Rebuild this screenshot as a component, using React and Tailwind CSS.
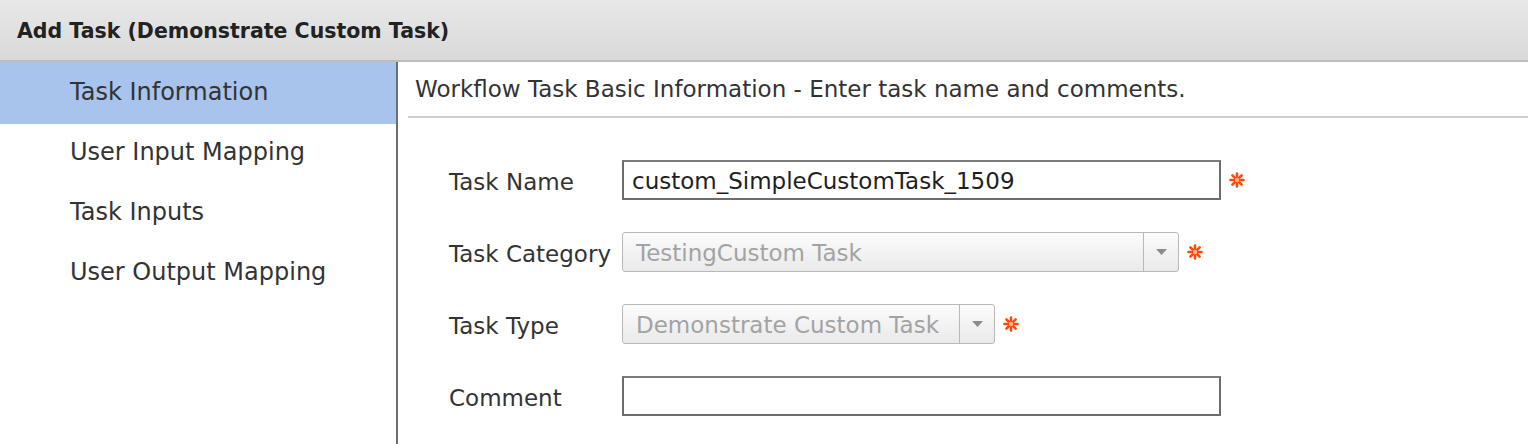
import React from "react";

const font = { fontFamily: '"DejaVu Sans", Verdana, sans-serif' };

function Required() {
  return (
    <svg width="16" height="16" viewBox="0 0 16 16" className="shrink-0">
      <g stroke="#ff4a0a" strokeWidth="2.6" strokeLinecap="round">
        <line x1="8" y1="1.5" x2="8" y2="14.5" />
        <line x1="1.5" y1="8" x2="14.5" y2="8" />
        <line x1="3.4" y1="3.4" x2="12.6" y2="12.6" />
        <line x1="12.6" y1="3.4" x2="3.4" y2="12.6" />
      </g>
      <circle cx="8" cy="8" r="2.2" fill="#ffb08a" />
    </svg>
  );
}

function TextBox({ value }) {
  return (
    <div className="w-[599px] h-[40px] border-2 border-[#6c6c6c] border-t-[#7c7c7c] bg-white flex items-center pl-[8px] pt-[3px] text-[23px] text-[#1e1e1e]">
      {value}
    </div>
  );
}

function Select({ value, width }) {
  return (
    <div
      className={`${width} h-[40px] border border-[#b8b8b8] rounded-[3px] bg-gradient-to-b from-[#fcfcfc] to-[#e9e9e9] flex items-stretch`}
    >
      <div className="flex-1 flex items-center pl-[13px] pt-[3px] text-[23px] text-[#a3a3a3]">{value}</div>
      <div className="w-[35px] border-l border-[#b8b8b8] flex items-center justify-center">
        <svg width="11" height="7" viewBox="0 0 11 7">
          <polygon points="0,0 11,0 5.5,6" fill="#8c8c8c" />
        </svg>
      </div>
    </div>
  );
}

function Row({ label, children, required }) {
  return (
    <div className="flex items-center h-[40px]">
      <div className="w-[173px] pt-[4px] text-[23px] text-[#333]">{label}</div>
      {children}
      {required && <div className="ml-[8px] flex items-center"><Required /></div>}
    </div>
  );
}

export default function App() {
  const navItems = ["Task Information", "User Input Mapping", "Task Inputs", "User Output Mapping"];

  return (
    <div className="w-[1528px] h-[444px] bg-white overflow-hidden flex flex-col" style={font}>
      {/* header */}
      <div className="h-[62px] shrink-0 bg-gradient-to-b from-[#e8e8e8] to-[#d9d9d9] border-b-2 border-[#bdbdbd] flex items-center pl-[17px] pt-[2px]">
        <span className="text-[20.5px] font-bold text-[#222]">Add Task (Demonstrate Custom Task)</span>
      </div>

      <div className="flex flex-1">
        {/* left nav */}
        <div className="w-[398px] shrink-0 border-r-2 border-[#6e6e6e] flex flex-col">
          {navItems.map((item, i) =>
            i === 0 ? (
              <div key={item} className="h-[62px] flex items-center pl-[70px] pb-[2px] text-[24px] text-[#333] bg-[#a8c3ec]">
                {item}
              </div>
            ) : (
              <div key={item} className="h-[60px] flex items-center pl-[70px] pb-[4px] text-[24px] text-[#333]">
                {item}
              </div>
            )
          )}
        </div>

        {/* right panel */}
        <div className="flex-1 pl-[10px]">
          <div className="h-[56px] border-b-2 border-[#cfcfcf] flex items-center pl-[7px] text-[23px] text-[#333]">
            Workflow Task Basic Information - Enter task name and comments.
          </div>
          <div className="pl-[41px] pt-[42px] flex flex-col gap-[32px]">
            <Row label="Task Name" required>
              <TextBox value="custom_SimpleCustomTask_1509" />
            </Row>
            <Row label="Task Category" required>
              <Select value="TestingCustom Task" width="w-[557px]" />
            </Row>
            <Row label="Task Type" required>
              <Select value="Demonstrate Custom Task" width="w-[373px]" />
            </Row>
            <Row label="Comment">
              <TextBox value="" />
            </Row>
          </div>
        </div>
      </div>
    </div>
  );
}
